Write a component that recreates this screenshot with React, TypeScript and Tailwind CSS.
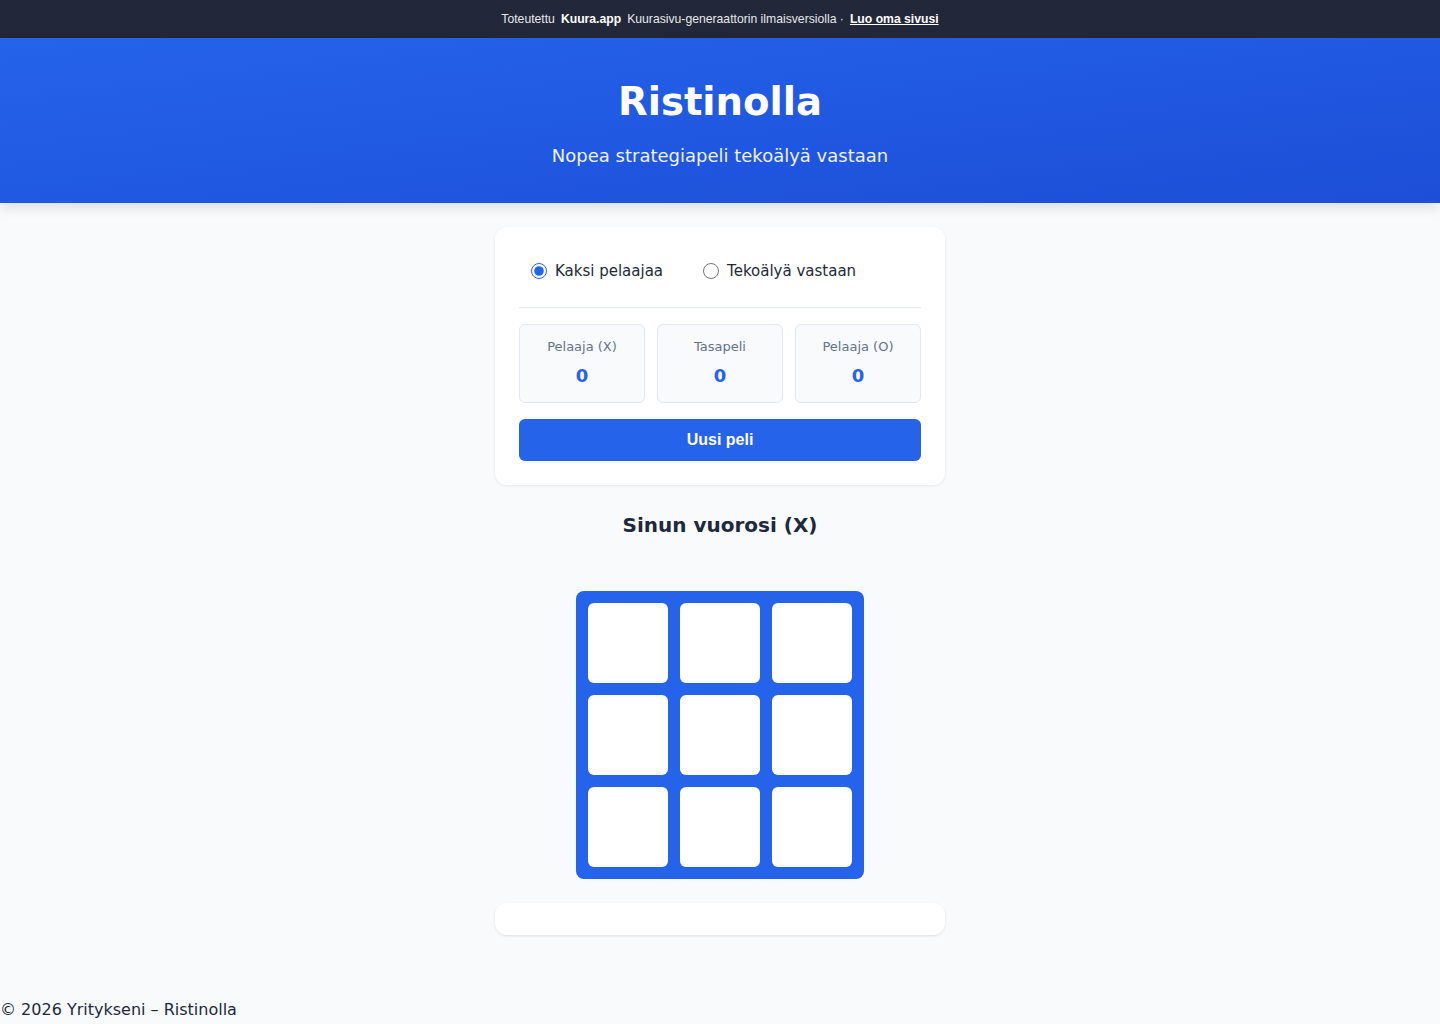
export default function App() {
  const cells = Array.from({ length: 9 });
  return (
    <div className="min-h-screen bg-[#f8fafc] text-[#1e293b] font-['DejaVu_Sans',sans-serif]">
      <div className="flex h-[38px] items-center justify-center bg-[#222739] font-['Liberation_Sans',Arial,sans-serif] text-[12.2px] text-[#e5e7eb]">
        <span>Toteutettu</span>
        <span className="ml-[6px] font-bold text-white">Kuura.app</span>
        <span className="ml-[6px]">Kuurasivu-generaattorin ilmaisversiolla ·</span>
        <a className="ml-[6px] font-bold text-white underline" href="#">
          Luo oma sivusi
        </a>
      </div>

      <header className="bg-gradient-to-br from-[#2563eb] to-[#1d4ed8] pt-[40px] pb-[34px] text-center text-white shadow-[0_4px_12px_rgba(0,0,0,0.12)]">
        <h1 className="text-[38.6px] font-bold leading-[48px]">Ristinolla</h1>
        <p className="mt-[17px] text-[18px] leading-[26px] text-[#eef2ff]">Nopea strategiapeli tekoälyä vastaan</p>
      </header>

      <main className="mx-auto flex w-[450px] flex-col items-center pt-[24px]">
        <section className="w-full rounded-[12px] bg-white p-[24px] shadow-[0_1px_3px_rgba(0,0,0,0.08)]">
          <div className="mb-[16px] flex gap-[16px] border-b border-[#e2e8f0] pb-[16px]">
            <label className="flex items-center gap-[8px] px-[12px] py-[8px] text-[15px] leading-[24px]">
              <input type="radio" name="mode" defaultChecked className="h-[16px] w-[16px] accent-[#2563eb]" />
              Kaksi pelaajaa
            </label>
            <label className="flex items-center gap-[8px] px-[12px] py-[8px] text-[15px] leading-[24px]">
              <input type="radio" name="mode" className="h-[16px] w-[16px] accent-[#2563eb]" />
              Tekoälyä vastaan
            </label>
          </div>

          <div className="grid grid-cols-3 gap-[12px]">
            {["Pelaaja (X)", "Tasapeli", "Pelaaja (O)"].map((l) => (
              <div key={l} className="flex h-[79px] flex-col items-center rounded-[6px] border border-[#e2e8f0] bg-[#f8fafc] pt-[12px]">
                <span className="text-[13px] leading-[20px] text-[#64748b]">{l}</span>
                <span className="mt-[8px] text-[18px] font-bold leading-[22px] text-[#2563eb]">0</span>
              </div>
            ))}
          </div>

          <button className="mt-[16px] h-[42px] w-full rounded-[6px] bg-[#2563eb] font-['Liberation_Sans',Arial,sans-serif] text-[16px] font-bold text-white">
            Uusi peli
          </button>
        </section>

        <h2 className="mt-[26px] text-[20px] font-bold leading-[28px]">Sinun vuorosi (X)</h2>

        <div className="mt-[52px] grid grid-cols-3 gap-[12px] rounded-[8px] bg-[#2563eb] p-[12px]">
          {cells.map((_, i) => (
            <button key={i} className="h-[80px] w-[80px] rounded-[6px] bg-white" />
          ))}
        </div>

        <div className="mt-[24px] h-[32px] w-full rounded-[12px] bg-white shadow-[0_1px_3px_rgba(0,0,0,0.1)]" />
      </main>

      <footer className="mt-[63px] text-[16px] leading-[24px]">© 2026 Yritykseni – Ristinolla</footer>
    </div>
  );
}
